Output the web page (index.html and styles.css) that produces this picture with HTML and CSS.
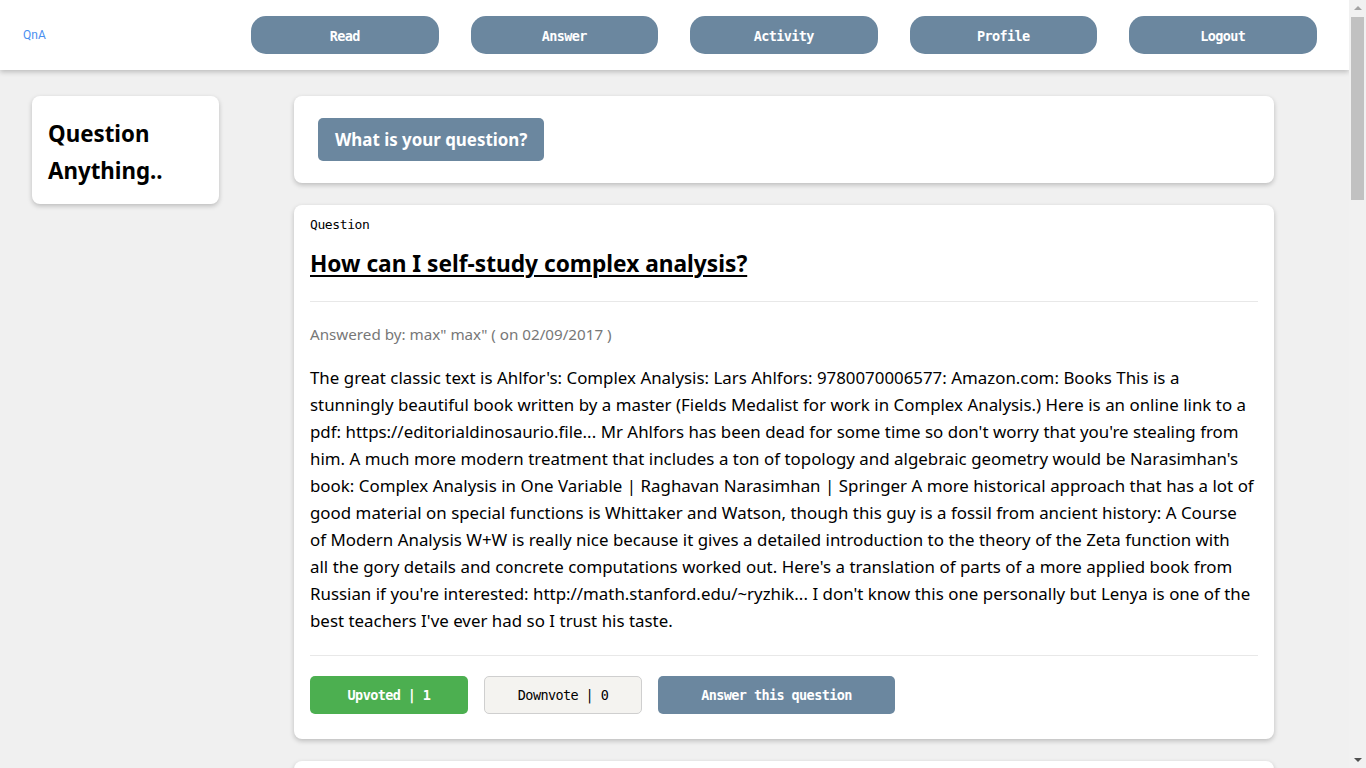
FILE: index.html
```html
<!DOCTYPE html>
<html lang="en">
<head>
<meta charset="utf-8">
<title>QnA</title>
<link rel="stylesheet" href="styles.css">
</head>
<body>
<header class="topbar">
  <a class="brand" href="#">QnA</a>
  <nav class="nav">
    <a class="nav-btn" href="#">Read</a>
    <a class="nav-btn" href="#">Answer</a>
    <a class="nav-btn" href="#">Activity</a>
    <a class="nav-btn" href="#">Profile</a>
    <a class="nav-btn" href="#">Logout</a>
  </nav>
</header>
<div class="page">
  <aside class="side">
    <div class="card side-card">
      <h2 class="side-title">Question Anything..</h2>
    </div>
  </aside>
  <main class="main">
    <div class="card ask-card">
      <button class="ask-btn">What is your question?</button>
    </div>

    <article class="card q-card">
      <div class="q-label">Question</div>
      <h1 class="q-title"><a href="#">How can I self-study complex analysis?</a></h1>
      <hr class="sep">
      <div class="q-meta">Answered by: max" max" ( on 02/09/2017 )</div>
      <p class="q-body">The great classic text is Ahlfor's: Complex Analysis: Lars Ahlfors: 9780070006577: Amazon.com: Books This is a stunningly beautiful book written by a master (Fields Medalist for work in Complex Analysis.) Here is an online link to a pdf: https://editorialdinosaurio.file... Mr Ahlfors has been dead for some time so don't worry that you're stealing from him. A much more modern treatment that includes a ton of topology and algebraic geometry would be Narasimhan's book: Complex Analysis in One Variable | Raghavan Narasimhan | Springer A more historical approach that has a lot of good material on special functions is Whittaker and Watson, though this guy is a fossil from ancient history: A Course<br>of Modern Analysis W+W is really nice because it gives a detailed introduction to the theory of the Zeta function with<br>all the gory details and concrete computations worked out. Here's a translation of parts of a more applied book from Russian if you're interested: http://math.stanford.edu/~ryzhik... I don't know this one personally but Lenya is one of the best teachers I've ever had so I trust his taste.</p>
      <hr class="sep">
      <div class="actions">
        <button class="btn btn-up">Upvoted | 1</button>
        <button class="btn btn-down">Downvote | 0</button>
        <button class="btn btn-answer">Answer this question</button>
      </div>
    </article>

    <article class="card q-card">
      <div class="q-label">Question</div>
      <h1 class="q-title"><a href="#">What are the best books to learn linear algebra?</a></h1>
      <hr class="sep">
      <div class="q-meta">Answered by: max" max" ( on 02/09/2017 )</div>
      <p class="q-body">Linear Algebra Done Right by Sheldon Axler is a wonderful introduction that avoids determinants until the very end. For a more computational approach, Gilbert Strang's Introduction to Linear Algebra together with his MIT lectures is hard to beat. If you want something more abstract, Hoffman and Kunze is a classic that covers the theory in depth, and Halmos' Finite-Dimensional Vector Spaces remains a beautiful read decades after it was written.</p>
      <hr class="sep">
      <div class="actions">
        <button class="btn btn-down">Upvote | 0</button>
        <button class="btn btn-down">Downvote | 0</button>
        <button class="btn btn-answer">Answer this question</button>
      </div>
    </article>

    <article class="card q-card">
      <div class="q-label">Question</div>
      <h1 class="q-title"><a href="#">How do I get started with competitive programming?</a></h1>
      <hr class="sep">
      <div class="q-meta">Answered by: max" max" ( on 02/09/2017 )</div>
      <p class="q-body">Start by picking one language and learning its standard library well. Then solve easy problems on an online judge every day, gradually increasing the difficulty. Read editorials for problems you could not solve, and keep a notebook of techniques: prefix sums, two pointers, binary search, graph traversals, dynamic programming. Consistency matters far more than talent in the beginning.</p>
      <hr class="sep">
      <div class="actions">
        <button class="btn btn-down">Upvote | 0</button>
        <button class="btn btn-down">Downvote | 0</button>
        <button class="btn btn-answer">Answer this question</button>
      </div>
    </article>

    <article class="card q-card">
      <div class="q-label">Question</div>
      <h1 class="q-title"><a href="#">What is the most beautiful proof you know?</a></h1>
      <hr class="sep">
      <div class="q-meta">Answered by: max" max" ( on 02/09/2017 )</div>
      <p class="q-body">Euclid's proof that there are infinitely many primes is short, elegant and still surprising the first time you see it. Cantor's diagonal argument is another favourite: in a few lines it shows that the real numbers cannot be listed, and in doing so it opened up an entire field of mathematics.</p>
      <hr class="sep">
      <div class="actions">
        <button class="btn btn-down">Upvote | 0</button>
        <button class="btn btn-down">Downvote | 0</button>
        <button class="btn btn-answer">Answer this question</button>
      </div>
    </article>
  </main>
</div>
<div class="scrollbar" aria-hidden="true">
  <span class="sb-arrow sb-up"></span>
  <span class="sb-thumb"></span>
  <span class="sb-arrow sb-down"></span>
</div>
</body>
</html>
```

FILE: styles.css
```css
* { box-sizing: border-box; }
html, body { margin: 0; padding: 0; }
body {
  background: #f0f0f0;
  font-family: "Noto Sans", "Open Sans", "DejaVu Sans", sans-serif;
  color: #000;
  margin-right: 17px;
}
.scrollbar {
  position: fixed;
  top: 0;
  right: 0;
  width: 17px;
  height: 100vh;
  background: #f1f1f1;
  z-index: 10;
  display: flex;
  flex-direction: column;
  align-items: center;
}
.sb-arrow {
  width: 0;
  height: 0;
  border-left: 4px solid transparent;
  border-right: 4px solid transparent;
}
.sb-up {
  border-bottom: 4px solid #a3a3a3;
  margin-top: 6px;
}
.sb-thumb {
  width: 13px;
  height: 183px;
  background: #c1c1c1;
  margin-top: 7px;
}
.sb-down {
  border-top: 4px solid #505050;
  margin-top: auto;
  margin-bottom: 6px;
}
.topbar {
  height: 70px;
  background: #fff;
  display: flex;
  align-items: center;
  box-shadow: 0 2px 5px rgba(0,0,0,0.22);
  position: relative;
  z-index: 2;
}
.brand {
  font-family: "Roboto", "Liberation Sans", sans-serif;
  font-size: 12px;
  color: #4a8ff0;
  text-decoration: none;
  margin-left: 23px;
  width: 228px;
}
.nav {
  display: flex;
  gap: 32px;
}
.nav-btn {
  width: 187.5px;
  height: 38px;
  display: flex;
  align-items: center;
  justify-content: center;
  background: #6b879f;
  color: #fff;
  border-radius: 15px;
  text-decoration: none;
  font-family: "DejaVu Sans Mono", "Liberation Mono", monospace;
  font-weight: bold;
  font-size: 13.5px;
  letter-spacing: -0.6px;
  padding-top: 1px;
}
.page {
  display: flex;
  align-items: flex-start;
  padding: 26px 0 40px 32px;
  gap: 75px;
}
.card {
  background: #fff;
  border-radius: 8px;
  box-shadow: 0 2px 5px rgba(0,0,0,0.22);
}
.side { width: 187px; flex: none; }
.side-card {
  padding: 19px 16px 20px 16px;
  height: 108px;
}
.side-title {
  margin: 0;
  font-size: 22.3px;
  font-weight: bold;
  line-height: 37px;
}
.main {
  width: 980px;
  flex: none;
  display: flex;
  flex-direction: column;
  gap: 22px;
}
.ask-card {
  height: 87px;
  padding: 22px 24px;
}
.ask-btn {
  height: 43px;
  padding: 0 17px;
  border: none;
  border-radius: 5px;
  background: #6b879f;
  color: #fff;
  font-family: "Noto Sans", "Open Sans", sans-serif;
  font-weight: bold;
  font-size: 16.9px;
}
.q-card {
  padding: 11px 16px 25px 16px;
}
.q-label {
  font-family: "DejaVu Sans Mono", "Liberation Mono", monospace;
  font-size: 13px;
  letter-spacing: -0.4px;
  line-height: 18px;
}
.q-title {
  margin: 14px 0 0 0;
  font-size: 22.7px;
  line-height: 32px;
  font-weight: bold;
}
.q-title a {
  color: #000;
  text-decoration: underline;
  text-decoration-thickness: 2px;
  text-underline-offset: 3px;
}
.sep {
  border: none;
  border-top: 1px solid #e8e8e8;
  margin: 21px 0 0 0;
}
.q-meta {
  margin-top: 21px;
  color: #777;
  font-size: 15.2px;
  line-height: 22px;
}
.q-body {
  margin: 19px 0 18px 0;
  font-size: 16.88px;
  word-spacing: 0.1px;
  line-height: 27px;
}
.actions {
  display: flex;
  gap: 16px;
  margin-top: 20px;
}
.btn {
  height: 38px;
  border-radius: 5px;
  font-family: "DejaVu Sans Mono", "Liberation Mono", monospace;
  font-weight: bold;
  font-size: 13.5px;
  letter-spacing: -0.6px;
  border: 1px solid transparent;
}
.btn-up { width: 158px; background: #4caf50; color: #fff; }
.btn-down { width: 158px; background: #f4f3f0; color: #000; border-color: #cfcfcf; font-weight: normal; }
.btn-answer { width: 237px; background: #6b879f; color: #fff; }
```
